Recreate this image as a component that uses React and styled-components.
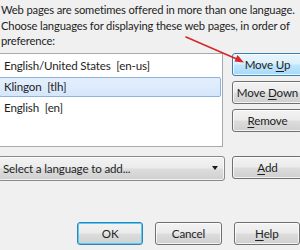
import React from "react";
import styled, { createGlobalStyle, css } from "styled-components";

const GlobalStyle = createGlobalStyle`
    html, body {
        margin: 0;
        padding: 0;
        background: #f0f0f0;
    }
`

const languages = [
    { name: "English/United States", code: "en-us" },
    { name: "Klingon", code: "tlh", selected: true },
    { name: "English", code: "en" },
]

const introLines = [
    "Web pages are sometimes offered in more than one language.",
    "Choose languages for displaying these web pages, in order of",
    "preference:",
]

const App = () => {
    return (
        <Dialog>
            <GlobalStyle />
            <Intro>
                {introLines.map((line) => (
                    <Line key={line}>{line}</Line>
                ))}
            </Intro>

            <ListRow>
                <List>
                    {languages.map((lang) => (
                        <Item key={lang.code} selected={lang.selected}>
                            {lang.name}&nbsp; [{lang.code}]
                        </Item>
                    ))}
                </List>
                <SideButtons>
                    <Button hot><span>Move <u>U</u>p</span></Button>
                    <Button><span>Move <u>D</u>own</span></Button>
                    <Button><span><u>R</u>emove</span></Button>
                </SideButtons>
            </ListRow>

            <AddRow>
                <Dropdown>
                    <span>Select a language to add...</span>
                    <Caret />
                </Dropdown>
                <Button><span><u>A</u>dd</span></Button>
            </AddRow>

            <Footer>
                <Button focused>OK</Button>
                <Button>Cancel</Button>
                <Button><span><u>H</u>elp</span></Button>
            </Footer>

            <Pointer width="300" height="250" viewBox="0 0 300 250">
                <line x1="186" y1="37" x2="239" y2="60" stroke="#d8262b" strokeWidth="1.6" strokeLinecap="round" />
                <polygon points="244,62.5 234.5,61.5 237.5,55" fill="#d8262b" />
            </Pointer>
        </Dialog>
    )
}

const Dialog = styled.div`
    position: relative;
    width: 300px;
    height: 250px;
    overflow: hidden;
    background: #f0f0f0;
    font-family: Lato, "Open Sans", sans-serif;
    font-size: 11.2px;
    letter-spacing: -0.15px;
    color: #1e1e1e;
`

const Intro = styled.div`
    padding: 2px 0 0 1px;
    line-height: 15.5px;
`

const Line = styled.div`
    white-space: nowrap;
`

const ListRow = styled.div`
    display: grid;
    grid-template-columns: 225px 71px;
    column-gap: 9px;
    margin: 4px 0 0 -2px;
`

const List = styled.div`
    height: 90px;
    background: #fff;
    border: 1px solid #a6a9ae;
    padding: 2px 1px 0 0;
    display: flex;
    flex-direction: column;
    font-size: 11.6px;
`

const Item = styled.div`
    height: 18px;
    line-height: 17px;
    padding-left: 4px;
    margin-bottom: 1px;
    white-space: nowrap;
    border: 1px solid transparent;
    border-radius: 2px;
    ${(p) => p.selected && css`
        border-color: #8fb3de;
        background: linear-gradient(#e4effd, #d6e7fb);
    `}
`

const SideButtons = styled.div`
    display: flex;
    flex-direction: column;
    gap: 5px;
`

const Button = styled.button`
    height: 23px;
    width: 71px;
    padding: 0;
    font: inherit;
    font-size: 11.6px;
    letter-spacing: -0.15px;
    color: #1e1e1e;
    border: 1px solid #707070;
    border-radius: 3px;
    background: linear-gradient(#f3f3f3 0%, #ebebeb 48%, #dddddd 52%, #cfcfcf 100%);
    box-shadow: inset 0 0 0 1px rgba(255, 255, 255, 0.75);
    white-space: nowrap;
    overflow: visible;
    ${(p) => p.hot && css`
        border-color: #3c7fb1;
        background: linear-gradient(#eaf6fd 0%, #d9f0fc 48%, #bee6fd 52%, #a7d9f5 100%);
    `}
    ${(p) => p.focused && css`
        border-color: #3c7fb1;
        box-shadow: inset 0 0 0 1px #48d1fb;
    `}
    u {
        text-underline-offset: 2px;
    }
`

const AddRow = styled.div`
    display: grid;
    grid-template-columns: 227px 71px;
    column-gap: 7px;
    align-items: start;
    margin: 9px 0 0 -2px;
`

const Dropdown = styled.div`
    height: 23px;
    display: flex;
    align-items: center;
    justify-content: space-between;
    padding: 0 6px 0 4px;
    font-size: 11.6px;
    border: 1px solid #8a8a8a;
    border-radius: 3px;
    background: linear-gradient(#f3f3f3 0%, #ebebeb 48%, #dddddd 52%, #cfcfcf 100%);
    box-shadow: inset 0 0 0 1px rgba(255, 255, 255, 0.7);
`

const Caret = styled.span`
    width: 0;
    height: 0;
    border-left: 3.5px solid transparent;
    border-right: 3.5px solid transparent;
    border-top: 4px solid #1a1a1a;
`

const Footer = styled.div`
    display: flex;
    gap: 12px;
    margin: 41px 0 0 77px;
    ${Button} {
        width: 67px;
    }
`

const Pointer = styled.svg`
    position: absolute;
    top: 0;
    left: 0;
    pointer-events: none;
`

export default App
